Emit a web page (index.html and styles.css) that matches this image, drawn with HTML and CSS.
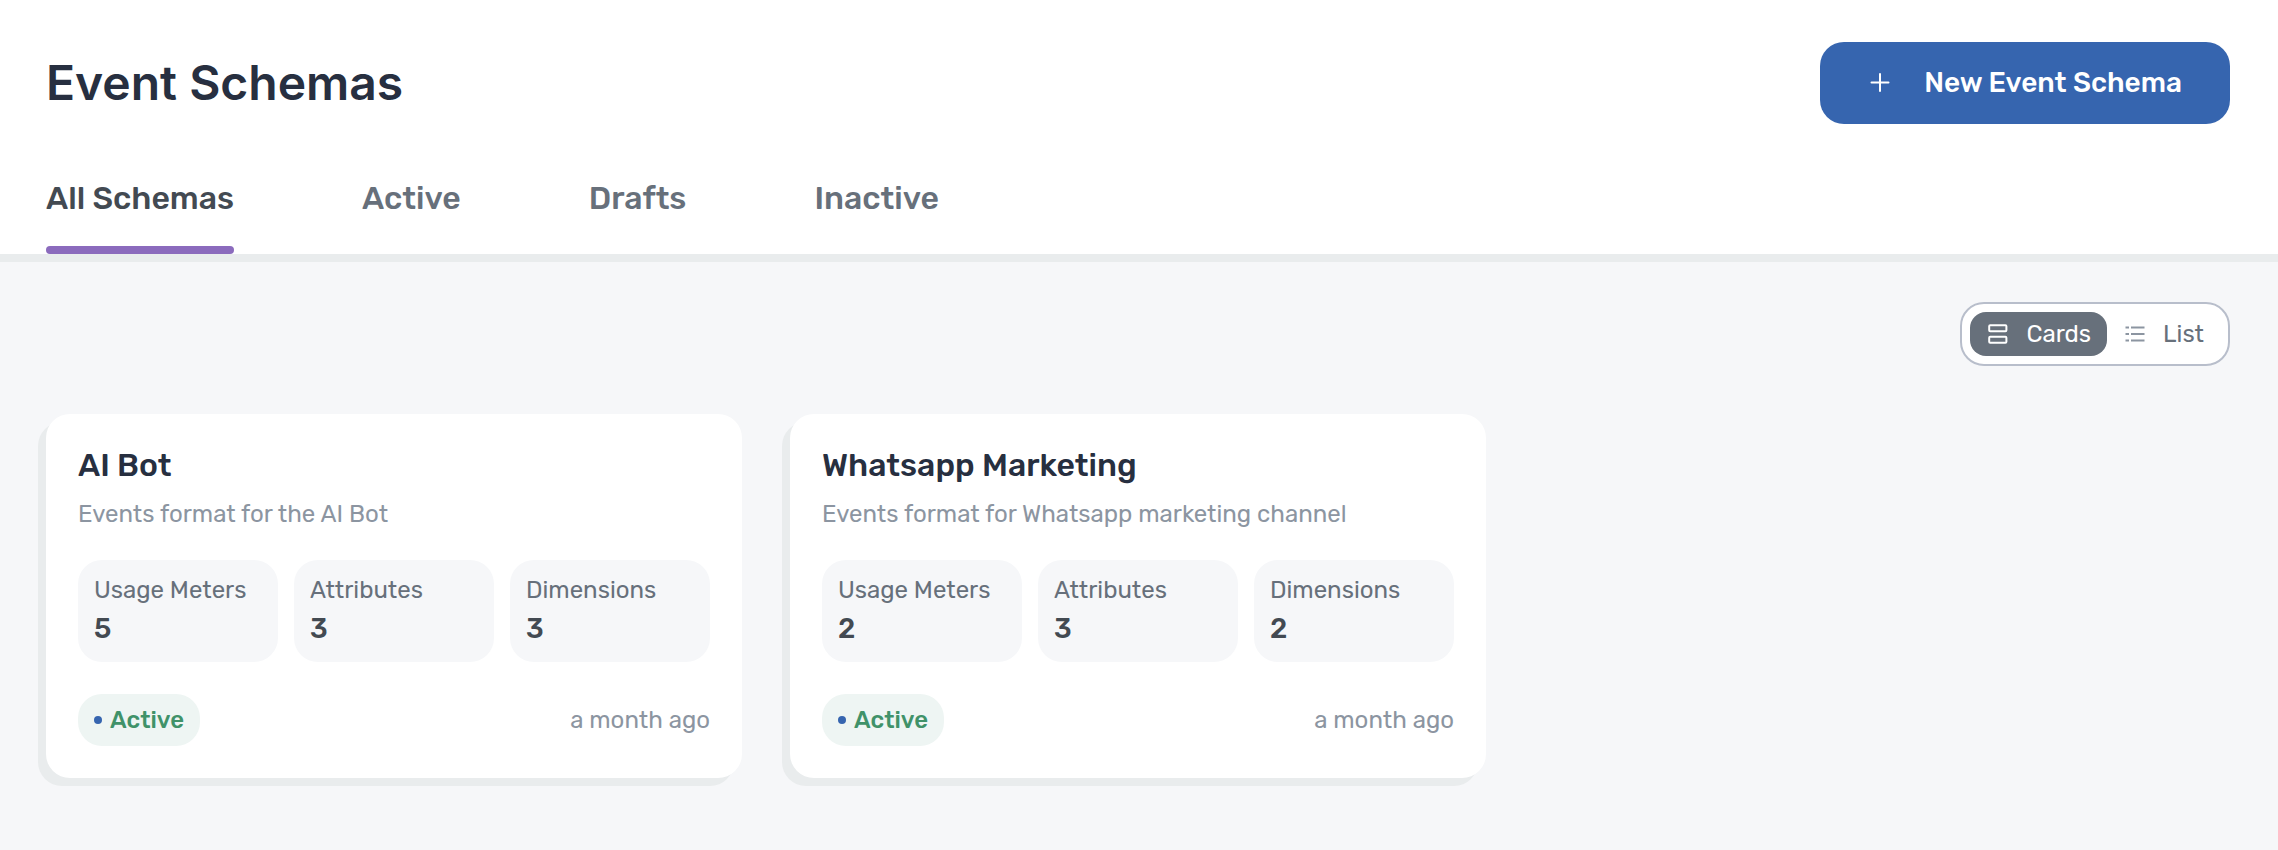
FILE: index.html
```html
<!DOCTYPE html>
<html lang="en">
<head>
<meta charset="utf-8">
<meta name="viewport" content="width=device-width, initial-scale=1">
<title>Event Schemas</title>
<link rel="stylesheet" href="styles.css">
</head>
<body>
<header class="page-header">
  <div class="title-row">
    <h1 class="page-title">Event Schemas</h1>
    <button class="primary-button" type="button">
      <svg class="icon icon-plus" viewBox="0 0 24 24" aria-hidden="true"><path d="M12 3v17M3.500 11.500h17"/></svg>
      New Event Schema
    </button>
  </div>
  <nav class="tabs" aria-label="Schema status">
    <a class="tab tab-active" href="#all" aria-current="page">All Schemas</a>
    <a class="tab" href="#active">Active</a>
    <a class="tab" href="#drafts">Drafts</a>
    <a class="tab" href="#inactive">Inactive</a>
  </nav>
</header>
<main class="content">
  <div class="view-toggle" role="group" aria-label="View">
    <button class="view-option view-selected" type="button" aria-pressed="true">
      <svg class="icon" viewBox="0 0 24 24" aria-hidden="true"><rect x="3.200" y="3.200" width="17.200" height="6" rx="1"/><rect x="3.200" y="14.800" width="17.200" height="6" rx="1"/></svg>
      Cards
    </button>
    <button class="view-option" type="button" aria-pressed="false">
      <svg class="icon icon-list" viewBox="0 0 24 24" aria-hidden="true"><path d="M2.500 5.500h3.500M8 5.500h13.500M2.500 12h3.500M8 12h13.500M2.500 18.500h3.500M8 18.500h13.500"/></svg>
      List
    </button>
  </div>
  <div class="cards">
    <article class="card">
      <h2 class="card-title">AI Bot</h2>
      <p class="card-text">Events format for the AI Bot</p>
      <dl class="stats">
        <div class="stat"><dt>Usage Meters</dt><dd>5</dd></div>
        <div class="stat"><dt>Attributes</dt><dd>3</dd></div>
        <div class="stat"><dt>Dimensions</dt><dd>3</dd></div>
      </dl>
      <div class="card-footer">
        <span class="status">Active</span>
        <span class="age">a month ago</span>
      </div>
    </article>
    <article class="card">
      <h2 class="card-title">Whatsapp Marketing</h2>
      <p class="card-text">Events format for Whatsapp marketing channel</p>
      <dl class="stats">
        <div class="stat"><dt>Usage Meters</dt><dd>2</dd></div>
        <div class="stat"><dt>Attributes</dt><dd>3</dd></div>
        <div class="stat"><dt>Dimensions</dt><dd>2</dd></div>
      </dl>
      <div class="card-footer">
        <span class="status">Active</span>
        <span class="age">a month ago</span>
      </div>
    </article>
  </div>
</main>
</body>
</html>
```
FILE: styles.css
```css
* {
  box-sizing: border-box;
}

body {
  margin: 0;
  min-height: 100vh;
  background: #f6f7f9;
  color: #272f40;
  font: 400 24px/32px Rubik, Roboto, sans-serif;
}

h1, h2, p, dl, dd {
  margin: 0;
}

button {
  border: 0;
  font: inherit;
  cursor: pointer;
}

.page-header {
  padding: 42px 48px 0 46px;
  background: #fff;
  border-bottom: 8px solid #e9eced;
}

.title-row {
  display: flex;
  justify-content: space-between;
  align-items: center;
}

.page-title {
  font: 600 48px/60px Inter, sans-serif;
}

.primary-button {
  display: flex;
  align-items: center;
  gap: 32px;
  padding: 25px 48px;
  border-radius: 24px;
  background: #3665af;
  color: #fff;
  font-size: 28px;
  font-weight: 500;
}

.icon {
  width: 24px;
  height: 24px;
  fill: none;
  stroke: currentColor;
  stroke-width: 2;
}

.icon-plus {
  stroke-linecap: round;
}

.icon-list {
  color: #8c95a1;
}

.tabs {
  display: flex;
  gap: 128px;
  padding-top: 54px;
}

.tab {
  color: #67707b;
  font-size: 32px;
  font-weight: 500;
  line-height: 40px;
  text-decoration: none;
}

.tab::after {
  content: "";
  display: block;
  height: 8px;
  margin-top: 28px;
  border-radius: 4px;
}

.tab-active {
  color: #434a52;
}

.tab-active::after {
  background: #8b6bbd;
}

.content {
  display: flex;
  flex-direction: column;
  padding: 40px 48px 48px 46px;
}

.view-toggle {
  display: flex;
  align-self: flex-end;
  padding: 8px;
  border: 2px solid #b8becb;
  border-radius: 24px;
  background: #fff;
}

.view-option {
  display: flex;
  align-items: center;
  gap: 16px;
  padding: 6px 16px;
  border-radius: 16px;
  background: transparent;
  color: #67707b;
}

.view-selected {
  background: #67707b;
  color: #fff;
}

.cards {
  display: grid;
  grid-template-columns: repeat(3, 1fr);
  gap: 48px;
  margin-top: 48px;
}

.card {
  padding: 32px;
  border-radius: 24px;
  background: #fff;
  box-shadow: -8px 8px 0 #e9eced;
}

.card-title {
  font-size: 32px;
  font-weight: 500;
  line-height: 38px;
}

.card-text {
  margin-top: 14px;
  color: #8c95a1;
}

.stats {
  display: grid;
  grid-template-columns: repeat(3, 1fr);
  gap: 16px;
  margin-top: 30px;
}

.stat {
  padding: 14px 16px;
  border-radius: 24px;
  background: #f6f7f9;
  color: #67707b;
}

.stat dd {
  margin-top: 6px;
  margin-bottom: 2px;
  color: #434a52;
  font-size: 28px;
  font-weight: 500;
  line-height: 34px;
}

.card-footer {
  display: flex;
  justify-content: space-between;
  align-items: center;
  margin-top: 32px;
}

.status {
  display: flex;
  align-items: center;
  gap: 8px;
  padding: 10px 16px;
  border-radius: 24px;
  background: #eef5f3;
  color: #409269;
  font-weight: 500;
}

.status::before {
  content: "";
  width: 8px;
  height: 8px;
  border-radius: 50%;
  background: #3665af;
}

.age {
  color: #8c95a1;
}
```
